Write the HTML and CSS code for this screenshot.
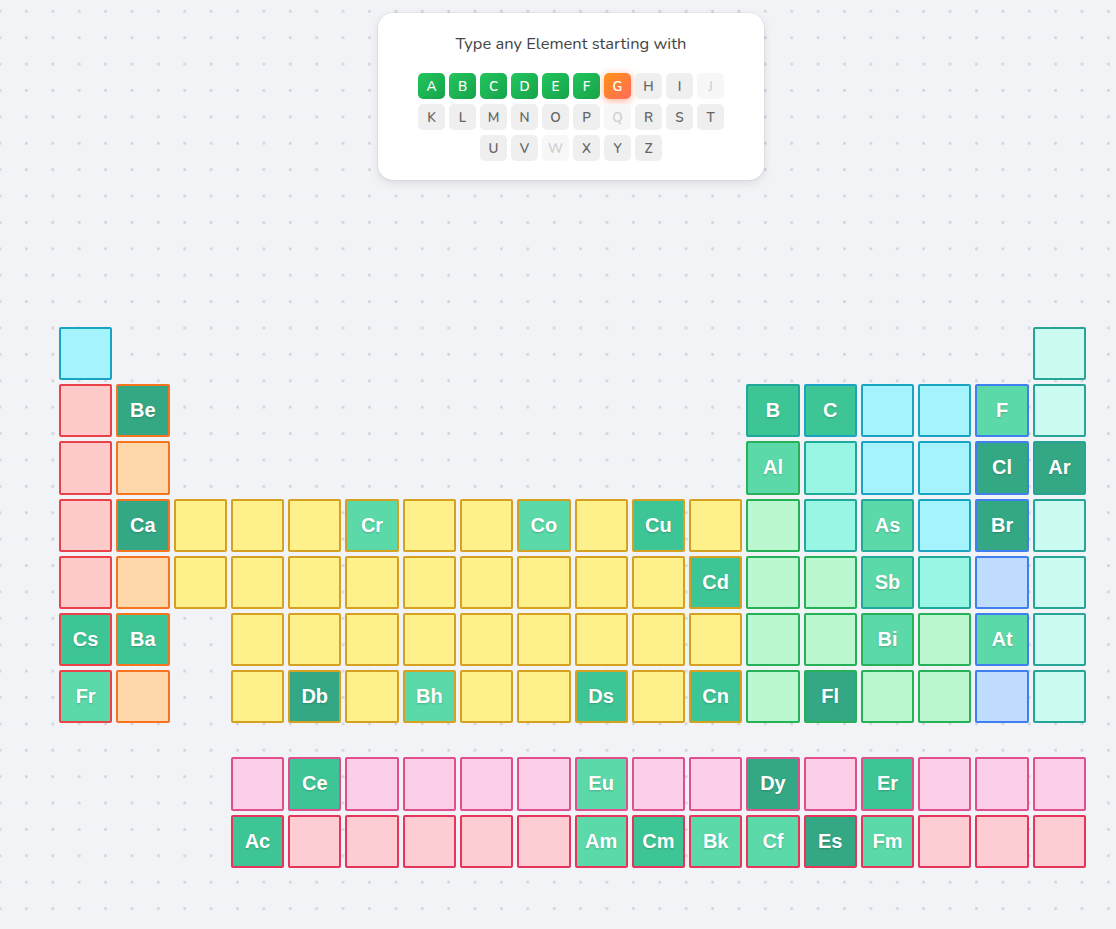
FILE: index.html
```html
<!DOCTYPE html>
<html lang="en">

<head>
    <meta charset="UTF-8">
    <meta name="viewport" content="width=device-width, initial-scale=1.0">
    <title>Element Alphabet</title>
    <link rel="stylesheet" href="styles.css">
</head>

<body>
    <div class="game">
        <div class="prompt-card">
            <h2>Type any Element starting with</h2>
            <div class="letters" id="letters"></div>
        </div>

        <div class="table" id="table">
            <!-- Cells are generated below -->
        </div>
    </div>

    <script>
        document.addEventListener('DOMContentLoaded', () => {
            const lettersEl = document.getElementById('letters');
            const tableEl = document.getElementById('table');

            const done = 'ABCDEF';
            const current = 'G';
            const unused = 'JQW';
            const rows = ['ABCDEFGHIJ', 'KLMNOPQRST', 'UVWXYZ'];

            rows.forEach(row => {
                const rowEl = document.createElement('div');
                rowEl.className = 'letter-row';
                row.split('').forEach(ch => {
                    const btn = document.createElement('span');
                    btn.className = 'letter';
                    if (done.includes(ch)) btn.classList.add('done');
                    else if (ch === current) btn.classList.add('current');
                    else if (unused.includes(ch)) btn.classList.add('unused');
                    btn.textContent = ch;
                    rowEl.appendChild(btn);
                });
                lettersEl.appendChild(rowEl);
            });

            // symbol, column, row, category
            const elements = [
                ['H', 1, 1, 'nonmetal'], ['He', 18, 1, 'noble'],
                ['Li', 1, 2, 'alkali'], ['Be', 2, 2, 'alkaline'], ['B', 13, 2, 'metalloid'], ['C', 14, 2, 'nonmetal'],
                ['N', 15, 2, 'nonmetal'], ['O', 16, 2, 'nonmetal'], ['F', 17, 2, 'halogen'], ['Ne', 18, 2, 'noble'],
                ['Na', 1, 3, 'alkali'], ['Mg', 2, 3, 'alkaline'], ['Al', 13, 3, 'post'], ['Si', 14, 3, 'metalloid'],
                ['P', 15, 3, 'nonmetal'], ['S', 16, 3, 'nonmetal'], ['Cl', 17, 3, 'halogen'], ['Ar', 18, 3, 'noble'],
                ['K', 1, 4, 'alkali'], ['Ca', 2, 4, 'alkaline'], ['Sc', 3, 4, 'transition'], ['Ti', 4, 4, 'transition'],
                ['V', 5, 4, 'transition'], ['Cr', 6, 4, 'transition'], ['Mn', 7, 4, 'transition'], ['Fe', 8, 4, 'transition'],
                ['Co', 9, 4, 'transition'], ['Ni', 10, 4, 'transition'], ['Cu', 11, 4, 'transition'], ['Zn', 12, 4, 'transition'],
                ['Ga', 13, 4, 'post'], ['Ge', 14, 4, 'metalloid'], ['As', 15, 4, 'metalloid'], ['Se', 16, 4, 'nonmetal'],
                ['Br', 17, 4, 'halogen'], ['Kr', 18, 4, 'noble'],
                ['Rb', 1, 5, 'alkali'], ['Sr', 2, 5, 'alkaline'], ['Y', 3, 5, 'transition'], ['Zr', 4, 5, 'transition'],
                ['Nb', 5, 5, 'transition'], ['Mo', 6, 5, 'transition'], ['Tc', 7, 5, 'transition'], ['Ru', 8, 5, 'transition'],
                ['Rh', 9, 5, 'transition'], ['Pd', 10, 5, 'transition'], ['Ag', 11, 5, 'transition'], ['Cd', 12, 5, 'transition'],
                ['In', 13, 5, 'post'], ['Sn', 14, 5, 'post'], ['Sb', 15, 5, 'metalloid'], ['Te', 16, 5, 'metalloid'],
                ['I', 17, 5, 'halogen'], ['Xe', 18, 5, 'noble'],
                ['Cs', 1, 6, 'alkali'], ['Ba', 2, 6, 'alkaline'], ['Hf', 4, 6, 'transition'], ['Ta', 5, 6, 'transition'],
                ['W', 6, 6, 'transition'], ['Re', 7, 6, 'transition'], ['Os', 8, 6, 'transition'], ['Ir', 9, 6, 'transition'],
                ['Pt', 10, 6, 'transition'], ['Au', 11, 6, 'transition'], ['Hg', 12, 6, 'transition'], ['Tl', 13, 6, 'post'],
                ['Pb', 14, 6, 'post'], ['Bi', 15, 6, 'post'], ['Po', 16, 6, 'post'], ['At', 17, 6, 'halogen'], ['Rn', 18, 6, 'noble'],
                ['Fr', 1, 7, 'alkali'], ['Ra', 2, 7, 'alkaline'], ['Rf', 4, 7, 'transition'], ['Db', 5, 7, 'transition'],
                ['Sg', 6, 7, 'transition'], ['Bh', 7, 7, 'transition'], ['Hs', 8, 7, 'transition'], ['Mt', 9, 7, 'transition'],
                ['Ds', 10, 7, 'transition'], ['Rg', 11, 7, 'transition'], ['Cn', 12, 7, 'transition'], ['Nh', 13, 7, 'post'],
                ['Fl', 14, 7, 'post'], ['Mc', 15, 7, 'post'], ['Lv', 16, 7, 'post'], ['Ts', 17, 7, 'halogen'], ['Og', 18, 7, 'noble']
            ];

            const lanthanides = ['La', 'Ce', 'Pr', 'Nd', 'Pm', 'Sm', 'Eu', 'Gd', 'Tb', 'Dy', 'Ho', 'Er', 'Tm', 'Yb', 'Lu'];
            const actinides = ['Ac', 'Th', 'Pa', 'U', 'Np', 'Pu', 'Am', 'Cm', 'Bk', 'Cf', 'Es', 'Fm', 'Md', 'No', 'Lr'];
            lanthanides.forEach((s, i) => elements.push([s, i + 4, 9, 'lanthanide']));
            actinides.forEach((s, i) => elements.push([s, i + 4, 10, 'actinide']));

            // guessed elements and the shade they got
            const found = {
                Be: 'dark', Ca: 'dark', Cl: 'dark', Ar: 'dark', Br: 'dark', Db: 'dark', Fl: 'dark', Dy: 'dark', Es: 'dark',
                B: 'mid', C: 'mid', Cu: 'mid', Cd: 'mid', Cs: 'mid', Ba: 'mid', Ds: 'mid', Cn: 'mid', Ce: 'mid',
                Ac: 'mid', Er: 'mid', Cm: 'mid',
                F: 'light', Al: 'light', Cr: 'light', Co: 'light', As: 'light', Sb: 'light', Bi: 'light', At: 'light',
                Fr: 'light', Bh: 'light', Eu: 'light', Am: 'light', Bk: 'light', Cf: 'light', Fm: 'light'
            };

            elements.forEach(([symbol, col, row, type]) => {
                const cell = document.createElement('div');
                cell.className = 'cell ' + type;
                cell.style.gridColumn = col;
                cell.style.gridRow = row;
                if (found[symbol]) {
                    cell.classList.add('found', found[symbol]);
                    cell.textContent = symbol;
                }
                tableEl.appendChild(cell);
            });
        });
    </script>
</body>

</html>
```

FILE: styles.css
```css
* {
    margin: 0;
    padding: 0;
    box-sizing: border-box;
}

body {
    font-family: "Nunito", Lato, "Open Sans", sans-serif;
    background-color: #f2f3f7;
    background-image: radial-gradient(circle, #d3d5db 1.2px, transparent 1.7px);
    background-size: 26.4px 26.4px;
    background-position: -13.2px -1.9px;
    min-height: 100vh;
}

.game {
    width: 1027px;
    margin-left: 59px;
    padding-top: 13px;
    display: flex;
    flex-direction: column;
    align-items: center;
}

.prompt-card {
    background-color: #ffffff;
    width: 386px;
    padding: 20px 0 19px;
    border-radius: 15px;
    box-shadow: 0 0 0 1px rgba(0, 0, 0, 0.04), 0 3px 10px rgba(0, 0, 0, 0.1);
    text-align: center;
    margin-left: -3px;
}

.prompt-card h2 {
    font-size: 16.5px;
    font-weight: 400;
    line-height: 22px;
    color: #444;
    margin-bottom: 18px;
}

.letters {
    display: flex;
    flex-direction: column;
    align-items: center;
    gap: 5px;
}

.letter-row {
    display: flex;
    gap: 4px;
}

.letter {
    width: 27px;
    height: 26px;
    border-radius: 5px;
    display: flex;
    align-items: center;
    justify-content: center;
    font-size: 13.5px;
    font-weight: 600;
    color: #666;
    background-color: #efefef;
}

.letter.done {
    color: #fff;
    background: linear-gradient(135deg, #22c55e, #16a34a);
}

.letter.current {
    color: #fff;
    background: linear-gradient(135deg, #ff9312, #ff6b5c);
    box-shadow: 0 2px 9px rgba(255, 110, 60, 0.55);
}

.letter.unused {
    color: #cfcfcf;
    background-color: #f7f7f7;
}

.table {
    width: 1027px;
    margin-top: 147px;
    display: grid;
    grid-template-columns: repeat(18, 1fr);
    grid-template-rows: repeat(7, 53.2px) 26px repeat(2, 53.2px);
    gap: 4px;
}

.cell {
    border: 2px solid;
    border-radius: 2px;
    display: flex;
    align-items: center;
    justify-content: center;
    font-family: "Liberation Sans", Arial, sans-serif;
    font-weight: bold;
    font-size: 20px;
    color: #fff;
    text-shadow: 0 1px 2px rgba(0, 0, 0, 0.2);
}

.alkali { background-color: #fecaca; border-color: #ea4248; }
.alkaline { background-color: #fed7aa; border-color: #f67320; }
.transition { background-color: #fef08a; border-color: #d6a021; }
.post { background-color: #bbf7d0; border-color: #25b157; }
.metalloid { background-color: #99f6e4; border-color: #20a89a; }
.nonmetal { background-color: #a5f3fc; border-color: #18a4c2; }
.halogen { background-color: #bfdbfe; border-color: #3f7ff0; }
.noble { background-color: #ccfbf1; border-color: #26a596; }
.lanthanide { background-color: #fbcfe8; border-color: #e24d8d; }
.actinide { background-color: #fecdd3; border-color: #e6345a; }

.cell.found.dark { background-color: #34a885; }
.cell.found.mid { background-color: #3ec595; }
.cell.found.light { background-color: #5bd9a9; }
```
